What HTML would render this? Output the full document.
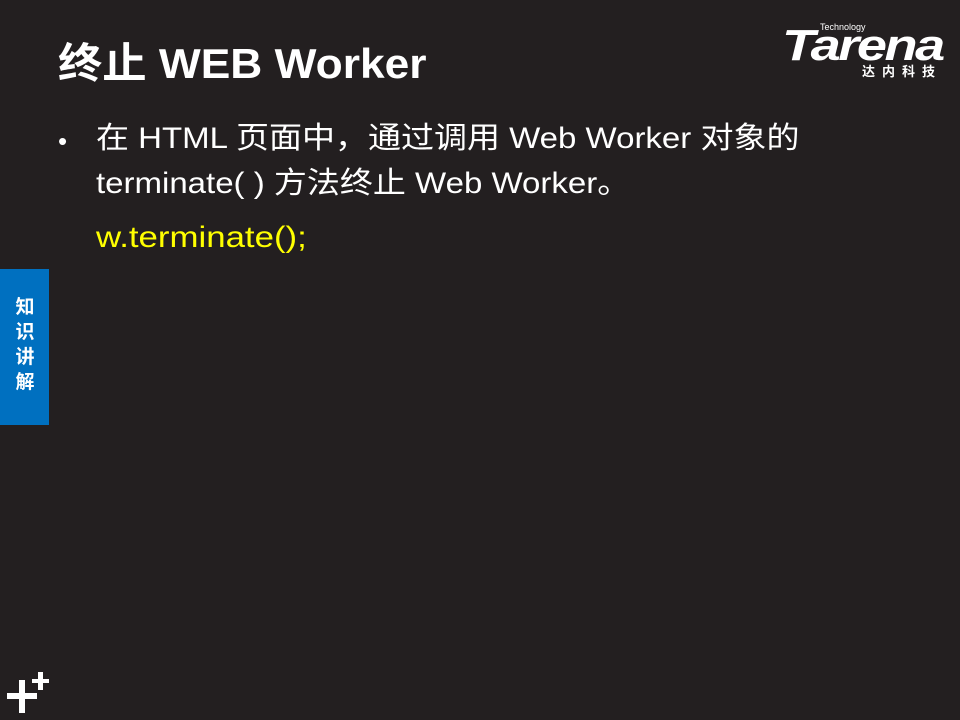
<!DOCTYPE html>
<html><head><meta charset="utf-8"><style>
body{margin:0;width:960px;height:720px;background:#231f20;position:relative;overflow:hidden;font-family:"Liberation Sans","Noto Sans CJK SC",sans-serif;color:#fff}
.a{position:absolute;white-space:nowrap;transform-origin:left top}
.t{left:58px;top:36px;font-size:42px;font-weight:bold;line-height:56px;transform:scaleX(1.055)}
.b{font-size:30px;line-height:40px;left:96px;transform:scaleX(1.1)}
</style></head><body>
<div class="a t">终止 WEB Worker</div>
<div class="a" style="left:58px;top:121px;font-size:26px;line-height:40px">•</div>
<div class="a b" style="top:119px">在 HTML 页面中，通过调用 Web Worker 对象的</div>
<div class="a b" style="top:164px">terminate( ) 方法终止 Web Worker。</div>
<div class="a b" style="top:218px;color:#ffff00;transform:scaleX(1.16)">w.terminate();</div>
<div class="a" style="left:782px;top:24px;font-size:44px;font-weight:bold;font-style:italic;letter-spacing:-2px;line-height:44px;transform:scaleX(1.23)">Tarena</div>
<div class="a" style="left:820px;top:22px;font-size:9px;line-height:10px">Technology</div>
<div class="a" style="left:862px;top:64px;font-size:13px;font-weight:bold;letter-spacing:7px;line-height:16px">达内科技</div>
<div class="a" style="left:0;top:269px;width:49px;height:156px;background:#0070c0"></div>
<div class="a" style="left:13px;top:295px;width:24px;font-size:19px;font-weight:bold;line-height:25px;white-space:normal;text-align:center">知识讲解</div>
<div class="a" style="left:7px;top:693px;width:30px;height:6px;background:#fff"></div>
<div class="a" style="left:19px;top:680px;width:6px;height:33px;background:#fff"></div>
<div class="a" style="left:32px;top:679px;width:17px;height:4px;background:#fff"></div>
<div class="a" style="left:38px;top:672px;width:5px;height:18px;background:#fff"></div>
</body></html>
